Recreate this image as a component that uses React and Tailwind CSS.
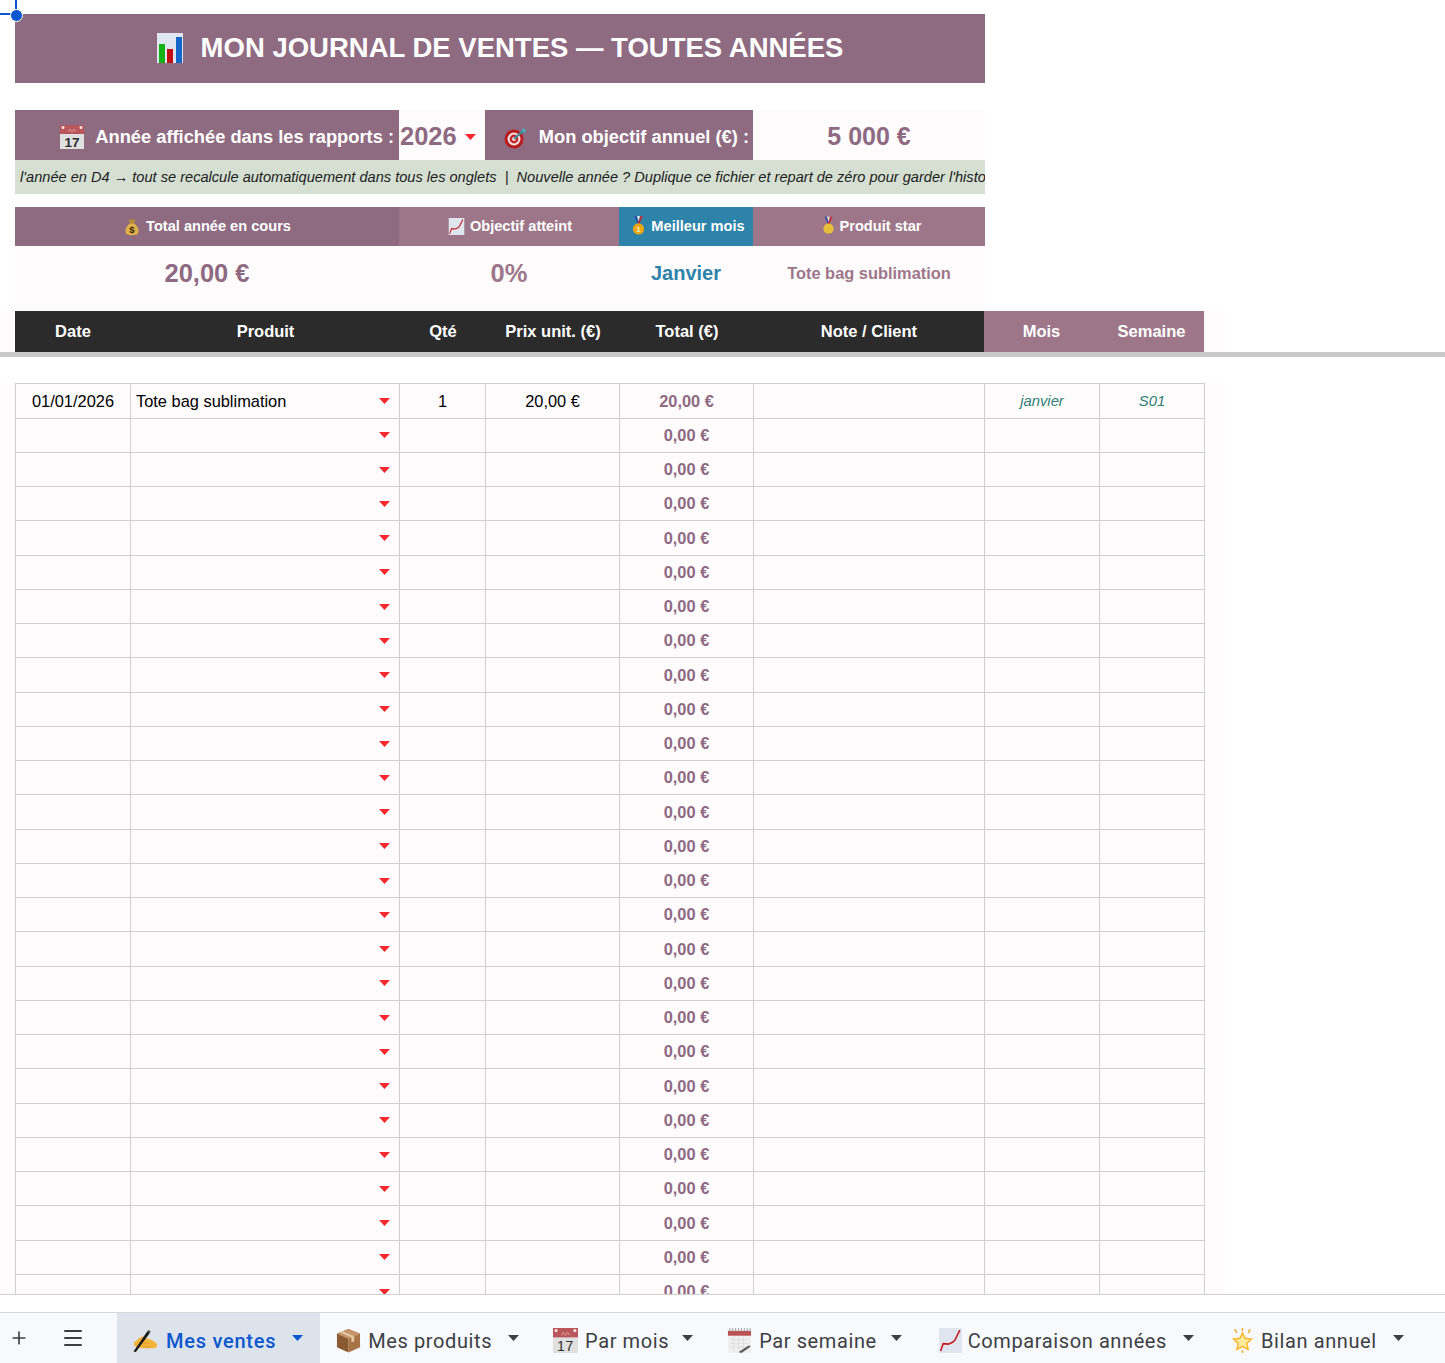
import React from "react";
import { Plus, Menu } from "lucide-react";

const headCols = "grid grid-cols-[116px_269px_86px_134px_134px_230px_115px_105px]";
const tableCols = "grid grid-cols-[116px_269px_86px_134px_134px_231px_115px_105px]";

function RedArrow() {
  return (
    <svg width="11" height="6" viewBox="0 0 11 6" className="shrink-0">
      <path d="M0 0h11L5.5 6z" fill="#f4282d" />
    </svg>
  );
}

function TabArrow({ active }) {
  return (
    <svg width="11" height="6" viewBox="0 0 11 6" className="shrink-0">
      <path d="M0 0h11L5.5 6z" fill={active ? "#0b57d0" : "#3c4043"} />
    </svg>
  );
}

function BarChartIcon({ className }) {
  return (
    <svg viewBox="0 0 26 30" className={className}>
      <rect width="26" height="30" fill="#dfe6f0" />
      <rect x="2" y="11" width="6" height="19" fill="#12b312" />
      <rect x="10" y="16" width="6" height="14" fill="#c10f0f" />
      <rect x="19" y="4" width="6" height="26" fill="#1466c8" />
    </svg>
  );
}

function CalendarIcon({ className }) {
  return (
    <svg viewBox="0 0 24 24" className={className}>
      <rect width="24" height="24" fill="#e0e0e0" />
      <rect width="24" height="9" fill="#b9565a" />
      <circle cx="3" cy="2.500" r="1.500" fill="#f3e3e3" />
      <circle cx="21" cy="2.500" r="1.500" fill="#f3e3e3" />
      <path d="M8 7l2-3 2 3M12 7l2-3 2 3" stroke="#dca9aa" strokeWidth=".8" fill="none" />
      <text x="12" y="22" textAnchor="middle" fontSize="13.500" fill="#2d2d2d" fontFamily="Liberation Sans, sans-serif">17</text>
    </svg>
  );
}

function TargetIcon({ className }) {
  return (
    <svg viewBox="0 0 24 24" className={className}>
      <circle cx="10" cy="14" r="9.500" fill="#b81a1e" />
      <circle cx="10" cy="14" r="6.500" fill="#f3e4e2" />
      <circle cx="10" cy="14" r="4.400" fill="#c8262a" />
      <circle cx="10" cy="14" r="2" fill="#f3e4e2" />
      <path d="M10 14L20 5" stroke="#3a8f9e" strokeWidth="2" />
      <path d="M18 6l1-4 1 2.500 3 .5-3 2.500z" fill="#49b4c6" />
    </svg>
  );
}

function MoneyBagIcon({ className }) {
  return (
    <svg viewBox="0 0 16 20" className={className}>
      <path d="M4 1l2 1 2-1 2 1 2-1-1.500 5h-5z" fill="#b98a32" />
      <path d="M5.500 6h5c3 2 5 5.500 5 8.500 0 3.500-2.500 5-7.500 5s-7.500-1.500-7.500-5C.5 11.500 2.500 8 5.500 6z" fill="#e0b04a" />
      <text x="8" y="17" textAnchor="middle" fontSize="11" fontWeight="700" fill="#33240c" fontFamily="Liberation Sans, sans-serif">$</text>
    </svg>
  );
}

function ChartUpIcon({ className }) {
  return (
    <svg viewBox="0 0 22 24" className={className}>
      <rect width="22" height="24" fill="#dfe5ee" />
      <path d="M1.500 22l2.500-7 5 .5 3.500-1.500L15 12l5-10" fill="none" stroke="#c4161c" strokeWidth="1.500" />
    </svg>
  );
}

function MedalIcon({ className, first }) {
  return (
    <svg viewBox="0 0 14 22" className={className}>
      <path d="M2 0l4 9h2L4.500 0z" fill="#3050a8" />
      <path d="M12 0L8 9H6l3.500-9z" fill="#c8282c" />
      <path d="M5.500 0h3L7 6z" fill="#f2f2f2" />
      <circle cx="7" cy="15" r="6.500" fill={first ? "#eba80e" : "#e9bf3a"} />
      {first && (
        <text x="7" y="18.500" textAnchor="middle" fontSize="9" fontWeight="700" fill="#fff3c8" fontFamily="Liberation Sans, sans-serif">1</text>
      )}
    </svg>
  );
}

function WritingIcon({ className }) {
  return (
    <svg viewBox="0 0 26 24" className={className}>
      <path d="M1 14c3-2 5-5 8-6 2-.5 3 .5 4 1.500 3 .5 6 1.500 9 3.500 2.500 1.500 3.500 3 3 5-.5 1.500-2 2-4 2H8c-3 0-6-1.500-7-3.500z" fill="#f5b53a" />
      <path d="M9 14c3 1 6 1 9 .5M10 18c3 1 6 1 9 .5" stroke="#d9922a" strokeWidth=".8" fill="none" />
      <path d="M.5 23.500L15 2.500l2.500 1.700L3 24z" fill="#1b1b1b" />
      <path d="M15 2.500l1-1.500 2.500 1.700-1 1.500z" fill="#444" />
    </svg>
  );
}

function PackageIcon({ className }) {
  return (
    <svg viewBox="0 0 26 26" className={className}>
      <path d="M13 1L25 6v14l-12 5.500z" fill="#a87445" />
      <path d="M13 1L1 6v14l12 5.500z" fill="#8a5a32" />
      <path d="M1 6l12 5.500L25 6 13 1z" fill="#c59468" />
      <path d="M7 3.500l12 5.200v5l-3 1.200V10L4.500 4.800z" fill="#e2c8a6" />
    </svg>
  );
}

function SpiralCalendarIcon({ className }) {
  return (
    <svg viewBox="0 0 24 26" className={className}>
      <rect y="2" width="24" height="24" fill="#f0f0f0" />
      <rect y="3" width="24" height="5" fill="#bd4f52" />
      <path d="M2 0v4M5 0v4M8 0v4M11 0v4M14 0v4M17 0v4M20 0v4M23 0v4" stroke="#8a8a8a" strokeWidth=".8" />
      <path d="M2 12h20M2 16h20M2 20h20M6 9v15M11 9v15M16 9v15" stroke="#d8d8d8" strokeWidth=".7" />
      <path d="M11 25l11-7 1.500 1.500L14 26z" fill="#5c5c5c" />
    </svg>
  );
}

function StarIcon({ className }) {
  return (
    <svg viewBox="0 0 24 26" className={className}>
      <path d="M12 5l2.800 5.700 6.700.8-4.900 4.400 1.300 6.400L12 19.300l-5.900 3 1.300-6.400-4.900-4.400 6.700-.8z" fill="#fde99a" stroke="#f6b82e" strokeWidth="1.500" />
      <path d="M4 1l2 4M20 1l-2 4M12 0v3M12 23v3" stroke="#f2a82a" strokeWidth="1.500" />
    </svg>
  );
}

const tabs = [
  { name: "Mes ventes", Icon: WritingIcon, active: true, iconGap: "mr-[8px]", textGap: "mr-[16px]", right: "pr-[17px]" },
  { name: "Mes produits", Icon: PackageIcon, iconGap: "mr-[7px]", textGap: "mr-[16px]", right: "pr-[18px]" },
  { name: "Par mois", Icon: CalendarIcon, iconGap: "mr-[7px]", textGap: "mr-[13px]", right: "pr-[18px]" },
  { name: "Par semaine", Icon: SpiralCalendarIcon, iconGap: "mr-[7px]", textGap: "mr-[14px]", right: "pr-[20px]" },
  { name: "Comparaison années", Icon: ChartUpIcon, iconGap: "mr-[5px]", textGap: "mr-[16px]", right: "pr-[20px]" },
  { name: "Bilan annuel", Icon: StarIcon, iconGap: "mr-[6px]", textGap: "mr-[16px]", right: "" },
];

function Row({ first }) {
  const cell = "border-r-[1.5px] border-b-[1.5px] border-[#cfcfcf] flex items-center justify-center text-black text-[16.400px]";
  return (
    <div className={tableCols + " h-[34.250px]"}>
      <div className={cell + " border-l-[1.5px]"}>{first && "01/01/2026"}</div>
      <div className={cell + " !justify-between pl-[5px] pr-[9px]"}>
        <span>{first && "Tote bag sublimation"}</span>
        <RedArrow />
      </div>
      <div className={cell}>{first && "1"}</div>
      <div className={cell}>{first && "20,00 €"}</div>
      <div className={cell + " font-bold !text-[#8e6a82]"}>{first ? "20,00 €" : "0,00 €"}</div>
      <div className={cell}></div>
      <div className={cell + " italic !text-[14.800px] !text-[#2f7f73]"}>{first && "janvier"}</div>
      <div className={cell + " italic !text-[14.800px] !text-[#2f7f73]"}>{first && "S01"}</div>
    </div>
  );
}

export default function App() {
  const rows = Array.from({ length: 27 }, (_, i) => i);

  return (
    <div className="relative w-[1445px] h-[1363px] overflow-hidden bg-white flex flex-col font-['Liberation_Sans',Arial,sans-serif]">
      {/* selected cell handle */}
      <div className="absolute left-0 top-[13px] w-[14px] h-[2px] bg-[#0b57d0]"></div>
      <div className="absolute left-[15px] top-0 w-[2px] h-[12px] bg-[#0b57d0]"></div>
      <div className="absolute left-[10px] top-[9px] w-[13px] h-[13px] rounded-full bg-[#0b57d0] border border-white"></div>

      <div className="h-[357px] shrink-0 border-b-[5px] border-[#c8c8c8] pt-[14px]">
        <div className="pl-[15px]">
          <div className="w-[970px] h-[69px] bg-[#8f6b82] flex items-center justify-center gap-[18px] text-white text-[27.500px] font-bold pb-[2px]">
            <BarChartIcon className="w-[26px] h-[30px]" />
            <span>MON JOURNAL DE VENTES — TOUTES ANNÉES</span>
          </div>

          <div className="w-[970px] h-[50px] mt-[27px] flex">
            <div className="w-[384px] bg-[#8f6b82] flex items-center justify-end gap-[11px] pr-[5px] pt-[3px] text-white text-[18.300px] font-bold">
              <CalendarIcon className="w-[24px] h-[24px]" />
              <span>Année affichée dans les rapports :</span>
            </div>
            <div className="w-[86px] bg-[#fefbfd] flex items-center justify-between pl-[1px] pr-[9px] pt-[3px] text-[#8e6a82] text-[25.500px] font-bold">
              <span>2026</span>
              <RedArrow />
            </div>
            <div className="w-[268px] bg-[#8f6b82] flex items-center justify-end gap-[11px] pr-[4px] pt-[3px] text-white text-[18.300px] font-bold">
              <TargetIcon className="w-[24px] h-[24px]" />
              <span>Mon objectif annuel (€) :</span>
            </div>
            <div className="w-[232px] bg-[#fefbfd] flex items-center justify-center pt-[3px] text-[#8e6a82] text-[25px] font-bold">5 000 €</div>
          </div>

          <div className="w-[970px] h-[34px] bg-[#d5e0d3] flex items-center pl-[5px] pt-[1px] overflow-hidden whitespace-nowrap text-[#1c1c1c] text-[14.600px] italic">
            l'année en D4 → tout se recalcule automatiquement dans tous les onglets&nbsp; |&nbsp; Nouvelle année ? Duplique ce fichier et repart de zéro pour garder l'historique
          </div>

          <div className="w-[970px] h-[39px] mt-[13px] flex text-white text-[14.600px] font-bold">
            <div className="w-[384px] bg-[#8f6b82] flex items-center justify-center gap-[7px] pl-[2px]">
              <MoneyBagIcon className="w-[14px] h-[18px]" />
              <span>Total année en cours</span>
            </div>
            <div className="w-[220px] bg-[#9d7789] flex items-center justify-center gap-[5px] pl-[2px]">
              <ChartUpIcon className="w-[17px] h-[17px]" />
              <span>Objectif atteint</span>
            </div>
            <div className="w-[134px] bg-[#2d83aa] flex items-center justify-center gap-[6px] pl-[5px]">
              <MedalIcon first className="w-[13px] h-[19px] mb-[2px]" />
              <span>Meilleur mois</span>
            </div>
            <div className="w-[232px] bg-[#9d7789] flex items-center justify-center gap-[6px] pl-[6px]">
              <MedalIcon className="w-[11px] h-[19px] mb-[2px]" />
              <span>Produit star</span>
            </div>
          </div>

          <div className="w-[970px] h-[64px] flex bg-[#fefbfd] font-bold pb-[9px]">
            <div className="w-[384px] flex items-center justify-center text-[#8e6a82] text-[25.500px]">20,00 €</div>
            <div className="w-[220px] flex items-center justify-center text-[#9d7789] text-[25.500px]">0%</div>
            <div className="w-[134px] flex items-center justify-center pb-[1px] text-[#2d83aa] text-[20px]">Janvier</div>
            <div className="w-[232px] flex items-center justify-center text-[#9d7789] text-[16.400px]">Tote bag sublimation</div>
          </div>
        </div>

        <div className="w-[1225px] h-[41px] mt-[1px] pl-[15px] bg-[#fefbfd]">
          <div className={headCols + " h-[41px] text-white text-[16.500px] font-bold"}>
            {["Date", "Produit", "Qté", "Prix unit. (€)", "Total (€)", "Note / Client"].map((label) => (
              <div key={label} className="bg-[#2b2b2b] flex items-center justify-center">{label}</div>
            ))}
            <div className="bg-[#9d7789] flex items-center justify-center">Mois</div>
            <div className="bg-[#9d7789] flex items-center justify-center">Semaine</div>
          </div>
        </div>
      </div>

      <div className="h-[938px] shrink-0 overflow-hidden border-b-[1.5px] border-[#cfcfcf] pt-[26.400px]">
        <div className="w-[1225px] pl-[15px] bg-[#fefbfd]">
          <div className="border-t-[1.5px] border-[#cfcfcf] w-[1190px]">
            {rows.map((i) => (
              <Row key={i} first={i === 0} />
            ))}
          </div>
        </div>
      </div>

      <div className="h-[17px] shrink-0"></div>

      <div className="flex-1 flex items-stretch bg-[#f8f9fd] border-t-[1.5px] border-[#d3d8d8] font-['Roboto',sans-serif] text-[20px] tracking-[0.6px] text-[#3c4043]">
        <div className="w-[37px] flex items-center justify-center">
          <Plus size={20} strokeWidth={2} />
        </div>
        <div className="w-[80px] flex items-center justify-center pr-[8px]">
          <Menu size={24} strokeWidth={2} />
        </div>
        {tabs.map(({ name, Icon, active, iconGap, textGap, right }) => (
          <div
            key={name}
            className={"flex items-center whitespace-nowrap pl-4 " + right + " " + (active ? "bg-[#dde3ea] text-[#0b57d0] font-medium tracking-[0.75px]" : "")}
          >
            <Icon className={"w-[25px] h-[25px] mt-[4px] " + iconGap} />
            <span className={"mt-[5px] " + textGap}>{name}</span>
            <TabArrow active={active} />
          </div>
        ))}
      </div>
    </div>
  );
}
